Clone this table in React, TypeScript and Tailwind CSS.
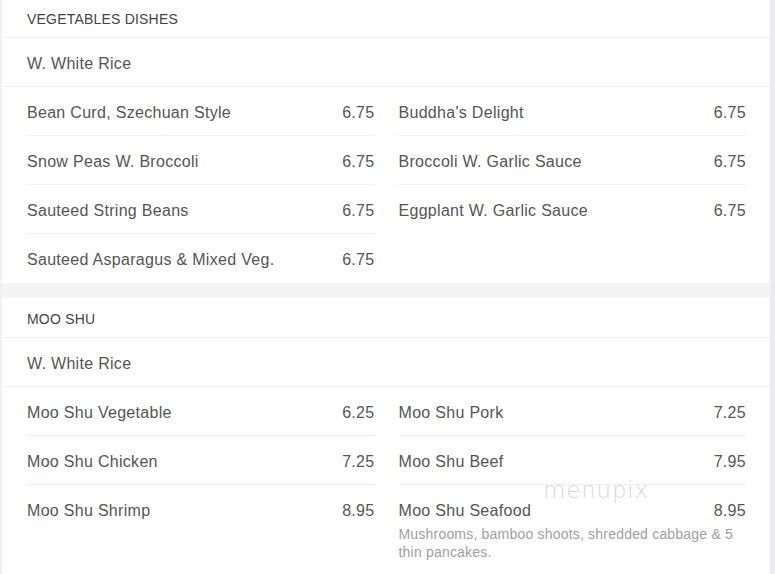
import React from "react";

type Item = { name: string; price: string; desc?: string };

const veg: [Item[], Item[]] = [
  [
    { name: "Bean Curd, Szechuan Style", price: "6.75" },
    { name: "Snow Peas W. Broccoli", price: "6.75" },
    { name: "Sauteed String Beans", price: "6.75" },
    { name: "Sauteed Asparagus & Mixed Veg.", price: "6.75" },
  ],
  [
    { name: "Buddha's Delight", price: "6.75" },
    { name: "Broccoli W. Garlic Sauce", price: "6.75" },
    { name: "Eggplant W. Garlic Sauce", price: "6.75" },
  ],
];

const mooshu: [Item[], Item[]] = [
  [
    { name: "Moo Shu Vegetable", price: "6.25" },
    { name: "Moo Shu Chicken", price: "7.25" },
    { name: "Moo Shu Shrimp", price: "8.95" },
  ],
  [
    { name: "Moo Shu Pork", price: "7.25" },
    { name: "Moo Shu Beef", price: "7.95" },
    {
      name: "Moo Shu Seafood",
      price: "8.95",
      desc: "Mushrooms, bamboo shoots, shredded cabbage & 5 thin pancakes.",
    },
  ],
];

function Column({ items }: { items: Item[] }) {
  return (
    <div className="flex flex-col">
      {items.map((it, i) => (
        <div
          key={i}
          className={
            "flex flex-col pt-[15px] " +
            (i < items.length - 1 ? "pb-[12px] border-b border-[#f0f0f0]" : "pb-[13px]")
          }
        >
          <div className="flex justify-between items-center h-[21px] text-[16px] text-[#555] tracking-[0.3px]">
            <span>{it.name}</span>
            <span>{it.price}</span>
          </div>
          {it.desc && (
            <div className="text-[14px] leading-[18px] text-[#a0a0a0] mt-[4px] pr-[8px] tracking-[0.2px]">
              {it.desc}
            </div>
          )}
        </div>
      ))}
    </div>
  );
}

function Section({ title, cols }: { title: string; cols: [Item[], Item[]] }) {
  return (
    <div className="bg-white">
      <div className="h-[40px] flex items-center pl-[25px] pt-[3px] border-b border-[#f0f0f0] text-[14px] text-[#444] uppercase tracking-[0.2px]">
        {title}
      </div>
      <div className="h-[49px] flex items-center pl-[25px] pt-[3px] border-b border-[#f0f0f0] text-[16px] text-[#555] tracking-[0.3px]">
        W. White Rice
      </div>
      <div className="grid grid-cols-2 gap-x-[24px] pl-[25px] pr-[24px]">
        <Column items={cols[0]} />
        <Column items={cols[1]} />
      </div>
    </div>
  );
}

export default function App() {
  return (
    <div
      className="w-[775px] h-[574px] overflow-hidden bg-[#f4f4f4] flex relative"
      style={{ fontFamily: '"Liberation Sans", Arial, sans-serif' }}
    >
      <div className="w-[2px] bg-[#f1f1f1]" />
      <div className="w-[768px] -mt-[2px] flex flex-col gap-[15px]">
        <Section title="Vegetables Dishes" cols={veg} />
        <Section title="Moo Shu" cols={mooshu} />
      </div>
      <div className="w-[5px] bg-[#ececf0]" />
      <div
        className="absolute left-[543px] top-[479px] text-[23px] text-[#d8d8d8] tracking-[0.8px] leading-none"
        style={{ fontFamily: '"DejaVu Sans", sans-serif', fontWeight: 200 }}
      >
        menupix
      </div>
    </div>
  );
}
